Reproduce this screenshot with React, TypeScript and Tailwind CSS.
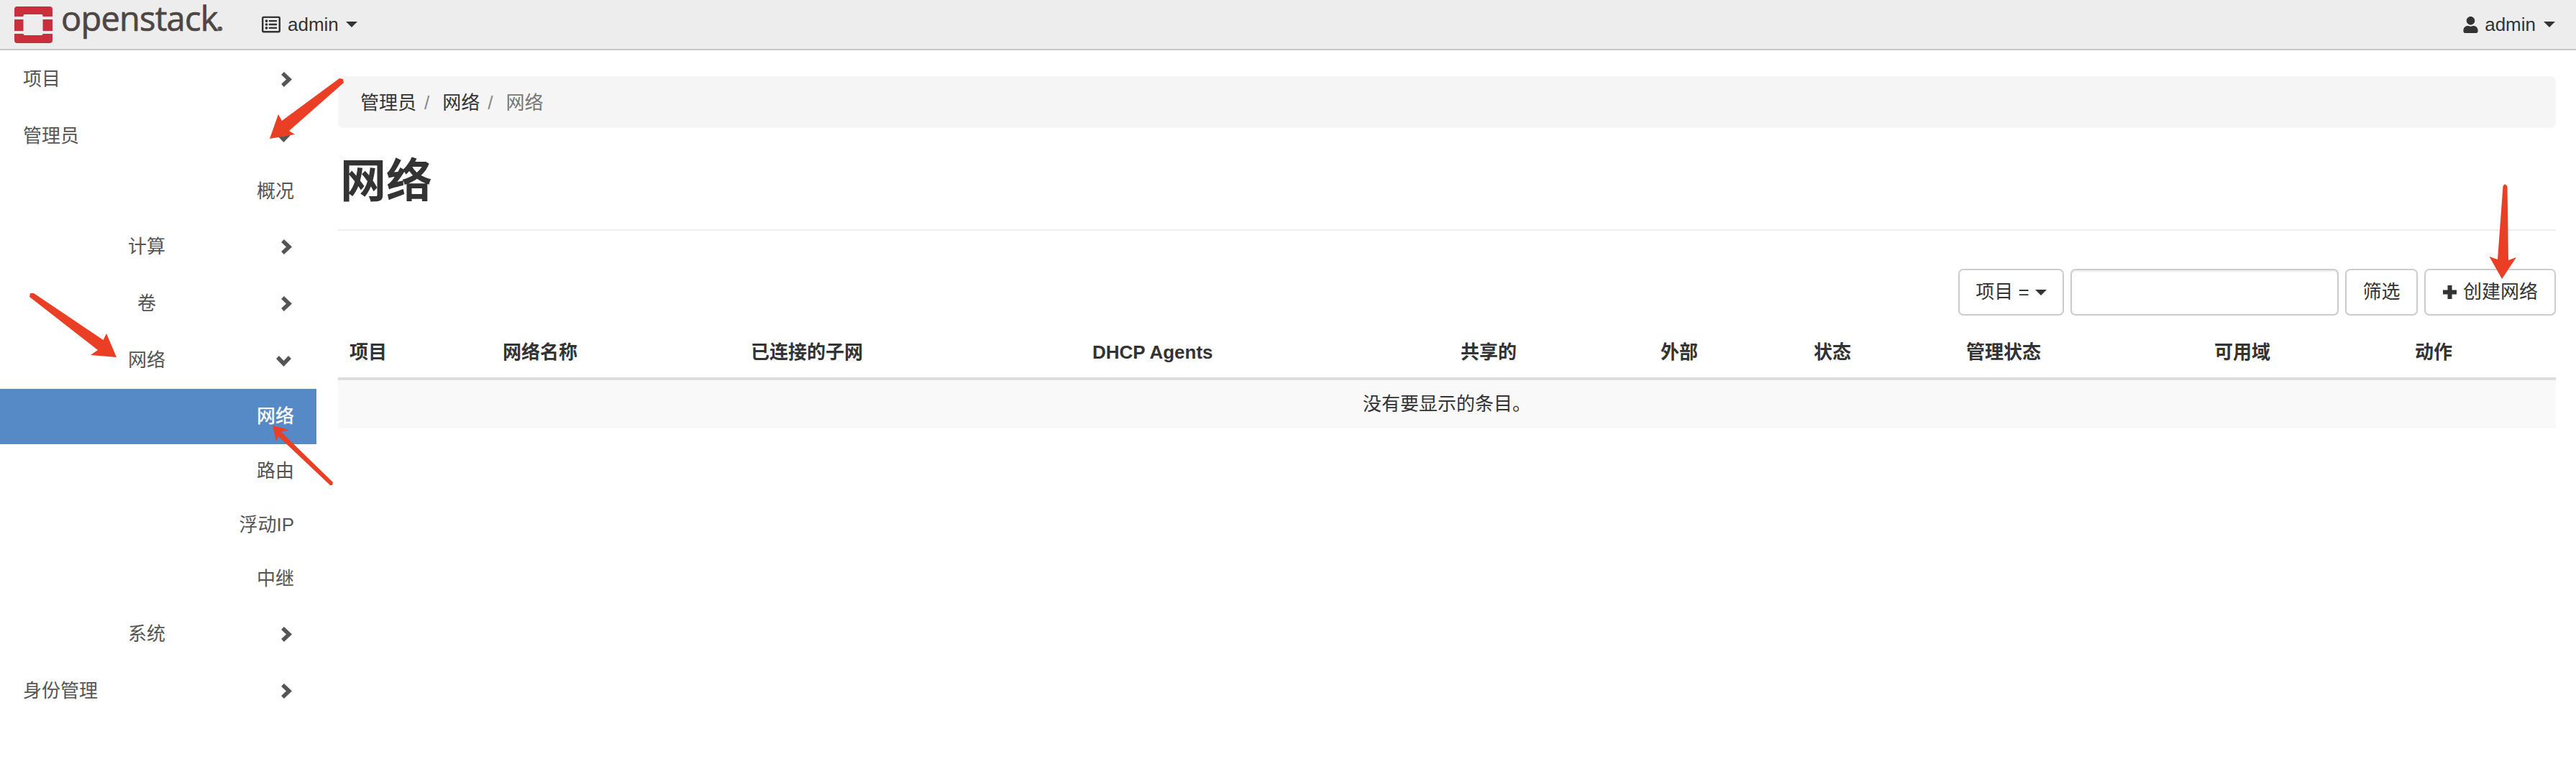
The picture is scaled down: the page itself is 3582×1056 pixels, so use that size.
import { FaRegListAlt, FaUser } from 'react-icons/fa';

const Caret = () => (
  <span className="inline-block w-0 h-0 border-x-[8px] border-t-[8px] border-x-transparent border-t-[#333]" />
);

const ChevronRight = () => (
  <svg width="16" height="23" viewBox="0 0 16 23" fill="none" className="shrink-0">
    <path d="M3 3 L12 11.5 L3 20" stroke="#555" strokeWidth="5.5" />
  </svg>
);

const ChevronDown = () => (
  <svg width="23" height="16" viewBox="0 0 23 16" fill="none" className="shrink-0">
    <path d="M3 3 L11.5 12 L20 3" stroke="#555" strokeWidth="5.5" />
  </svg>
);

const PlusIcon = () => (
  <svg width="21" height="21" viewBox="0 0 21 21" className="shrink-0">
    <path d="M7.5 1 H13.5 V7.5 H20 V13.5 H13.5 V20 H7.5 V13.5 H1 V7.5 H7.5 Z" fill="#333" />
  </svg>
);

const Logo = () => (
  <svg width="53" height="51" viewBox="0 0 53 51" className="shrink-0">
    <rect width="53" height="51" rx="4" fill="#c9303e" />
    <rect x="12.5" y="11" width="27" height="29" rx="2" fill="#ededed" />
    <rect x="0" y="14" width="13" height="4" fill="#ededed" />
    <rect x="39" y="14" width="14" height="4" fill="#ededed" />
    <rect x="0" y="34" width="13" height="4" fill="#ededed" />
    <rect x="39" y="34" width="14" height="4" fill="#ededed" />
  </svg>
);

const TopRow = ({ label, open }: { label: string; open?: boolean }) => (
  <div className="h-[79px] flex items-center justify-between pl-[32px] pr-[34px]">
    <span>{label}</span>
    {open ? <ChevronDown /> : <ChevronRight />}
  </div>
);

const GroupRow = ({ label, open }: { label: string; open?: boolean }) => (
  <div className="h-[79px] flex items-center pl-[178px] pr-[34px]">
    <span className="w-[52px] text-center">{label}</span>
    <span className="ml-auto">{open ? <ChevronDown /> : <ChevronRight />}</span>
  </div>
);

const LeafRow = ({ label, active }: { label: string; active?: boolean }) => (
  <div
    className={
      active
        ? 'h-[77px] flex items-center justify-end pr-[31px] bg-[#568ac6] text-white font-medium'
        : 'h-[75px] flex items-center justify-end pr-[31px]'
    }
  >
    {label}
  </div>
);

const columns = [
  { label: '项目', width: 'w-[213px]' },
  { label: '网络名称', width: 'w-[345px]' },
  { label: '已连接的子网', width: 'w-[475px]' },
  { label: 'DHCP Agents', width: 'w-[512px]' },
  { label: '共享的', width: 'w-[278px]' },
  { label: '外部', width: 'w-[213px]' },
  { label: '状态', width: 'w-[212px]' },
  { label: '管理状态', width: 'w-[345px]' },
  { label: '可用域', width: 'w-[279px]' },
  { label: '动作', width: 'w-[212px]' },
];

// the red annotation arrows drawn on top of the page
const arrows = [
  '375,193 387,159 392,168 472,109 477,110 478,115 402,182 410,187',
  '162,497 148,464 143.5,473 47,408 42,408 41,413 136,487 126,494',
  '379,592 402,598 391,601 463,671 462,675 459,675 387,607 384,614',
  '3479,388 3499,358 3488,362 3486.5,259 3483,256 3480.5,259 3473,361 3461.5,357',
];

function App() {
  return (
    <div className="relative w-[3582px] h-[1056px] bg-white overflow-hidden text-[26px] text-[#333] font-['Liberation_Sans','Noto_Sans_CJK_SC',sans-serif]">
      <header className="h-[70px] border-b-2 border-[#c8c8c8] bg-[#ededed] flex items-center pl-[20px] pr-[29px]">
        <Logo />
        <span className="ml-[12px] w-[259px] pb-[3px] text-[#4d4643] text-[47px] leading-[54px] tracking-[-0.8px] font-medium [-webkit-text-stroke:0.7px_#4d4643] font-['Open_Sans',sans-serif]">
          openstack<span className="text-[8px] align-baseline">®</span>
        </span>
        <FaRegListAlt className="ml-[20px] text-[26px] text-[#333]" />
        <span className="ml-[10px]">admin</span>
        <span className="ml-[10px] flex">
          <Caret />
        </span>
        <FaUser className="ml-auto text-[23px] text-[#333]" />
        <span className="ml-[8px]">admin</span>
        <span className="ml-[11px] flex">
          <Caret />
        </span>
      </header>

      <div className="flex">
        <nav className="w-[440px] shrink-0 pt-[1px] text-[#555]">
          <TopRow label="项目" />
          <TopRow label="管理员" open />
          <LeafRow label="概况" />
          <GroupRow label="计算" />
          <GroupRow label="卷" />
          <GroupRow label="网络" open />
          <LeafRow label="网络" active />
          <LeafRow label="路由" />
          <LeafRow label="浮动IP" />
          <LeafRow label="中继" />
          <GroupRow label="系统" />
          <TopRow label="身份管理" />
        </nav>

        <main className="flex-1 ml-[30px] mr-[28px] pt-[36px]">
          <div className="h-[72px] rounded-[7px] bg-[#f5f5f5] flex items-center pl-[31px] pt-[3px]">
            <span>管理员</span>
            <span className="ml-[11px] text-[#888]">/</span>
            <span className="ml-[18px]">网络</span>
            <span className="ml-[11px] text-[#888]">/</span>
            <span className="ml-[18px] text-[#777]">网络</span>
          </div>

          <div className="h-[143px] border-b-2 border-[#eee] flex items-center pt-[6px]">
            <h1 className="pl-[3px] text-[64px] font-bold leading-none">网络</h1>
          </div>

          <div className="mt-[53px] flex justify-end gap-[9px]">
            <button className="h-[65px] w-[147px] rounded-[7px] border-2 border-[#ccc] bg-white flex items-center justify-center gap-[8px]">
              <span>项目 =</span>
              <Caret />
            </button>
            <input className="h-[65px] w-[373px] rounded-[7px] border-2 border-[#ccc] bg-white shadow-[inset_0_2px_2px_rgba(0,0,0,0.08)]" />
            <button className="h-[65px] w-[101px] rounded-[7px] border-2 border-[#ccc] bg-white">筛选</button>
            <button className="h-[65px] w-[183px] rounded-[7px] border-2 border-[#ccc] bg-white flex items-center justify-center gap-[8px]">
              <PlusIcon />
              <span>创建网络</span>
            </button>
          </div>

          <table className="w-full table-fixed border-collapse">
            <thead>
              <tr className="h-[88px] border-b-4 border-[#ddd]">
                {columns.map((col) => (
                  <th key={col.label} className={`${col.width} px-[16px] pt-[16px] text-left font-bold`}>
                    {col.label}
                  </th>
                ))}
              </tr>
            </thead>
            <tbody>
              <tr className="h-[69px] bg-[#f9f9f9]">
                <td colSpan={10} className="text-center">
                  没有要显示的条目。
                </td>
              </tr>
            </tbody>
          </table>
        </main>
      </div>

      <svg className="absolute inset-0 pointer-events-none" width="3582" height="1056">
        {arrows.map((points) => (
          <polygon key={points} points={points} fill="#ea3f24" />
        ))}
      </svg>
    </div>
  );
}

export default App;
